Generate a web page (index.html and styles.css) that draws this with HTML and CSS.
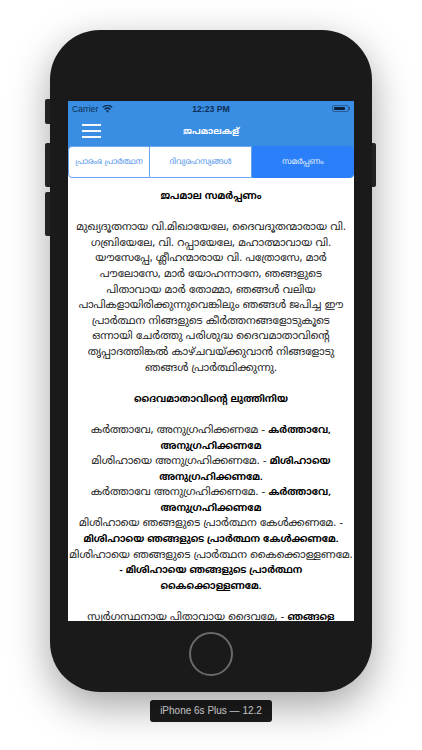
FILE: index.html
```html
<!DOCTYPE html>
<html lang="ml">
<head>
<meta charset="utf-8">
<title>ജപമാലകള്</title>
<link rel="stylesheet" href="styles.css">
</head>
<body>
<div class="device">
  <span class="side-btn mute"></span>
  <span class="side-btn vol-up"></span>
  <span class="side-btn vol-down"></span>
  <span class="side-btn power"></span>
  <div class="screen">
    <div class="status">
      <div class="status-left">Carrier
        <svg class="wifi" viewBox="0 0 12 9" width="11" height="8"><path d="M6 8.6 4.3 6.6a2.6 2.6 0 0 1 3.4 0zM3.3 5.5 2.2 4.2a5.8 5.8 0 0 1 7.6 0L8.7 5.5a4.2 4.2 0 0 0-5.4 0zM1.3 3.2.2 1.9a8.9 8.9 0 0 1 11.6 0l-1.1 1.3a7.3 7.3 0 0 0-9.4 0z"/></svg>
      </div>
      <div class="status-time">12:23 PM</div>
      <div class="status-right"><span class="battery"><span class="battery-fill"></span></span><span class="battery-tip"></span></div>
    </div>
    <div class="nav">
      <div class="menu"><span></span><span></span><span></span></div>
      <div class="nav-title">ജപമാലകള്</div>
    </div>
    <div class="tabs">
      <div class="tab t1">പ്രാരംഭ പ്രാർത്ഥന</div>
      <div class="tab t2">ദിവ്യരഹസ്യങ്ങൾ</div>
      <div class="tab t3 active">സമർപ്പണം</div>
    </div>
    <div class="content">
      <p><b>ജപമാല സമർപ്പണം</b></p>
      <p class="gap">മുഖ്യദൂതനായ വി.മിഖായേലേ, ദൈവദൂതന്മാരായ വി.<br>ഗബ്രിയേലേ, വി. റപ്പായേലേ, മഹാത്മാവായ വി.<br>യൗസേപ്പേ, ശ്ലീഹന്മാരായ വി. പത്രോസേ, മാർ<br>പൗലോസേ, മാർ യോഹന്നാനേ, ഞങ്ങളുടെ<br>പിതാവായ മാർ തോമ്മാ, ഞങ്ങൾ വലിയ<br>പാപികളായിരിക്കുന്നുവെങ്കിലും ഞങ്ങൾ ജപിച്ച ഈ<br>പ്രാർത്ഥന നിങ്ങളുടെ കീർത്തനങ്ങളോടുകൂടെ<br>ഒന്നായി ചേർത്തു പരിശുദ്ധ ദൈവമാതാവിന്റെ<br>തൃപ്പാദത്തിങ്കൽ കാഴ്ചവയ്ക്കുവാൻ നിങ്ങളോടു<br>ഞങ്ങൾ പ്രാർത്ഥിക്കുന്നു.</p>
      <p class="gap"><b>ദൈവമാതാവിന്റെ ലുത്തിനിയ</b></p>
      <p class="gap">കർത്താവേ, അനുഗ്രഹിക്കണമേ - <b>കർത്താവേ,<br>അനുഗ്രഹിക്കണമേ</b><br>മിശിഹായെ അനുഗ്രഹിക്കണമേ. - <b>മിശിഹായെ<br>അനുഗ്രഹിക്കണമേ.</b><br>കർത്താവേ അനുഗ്രഹിക്കണമേ. - <b>കർത്താവേ,<br>അനുഗ്രഹിക്കണമേ</b><br>മിശിഹായെ ഞങ്ങളുടെ പ്രാർത്ഥന കേൾക്കണമേ. -<br><b>മിശിഹായെ ഞങ്ങളുടെ പ്രാർത്ഥന കേൾക്കണമേ.</b><br>മിശിഹായെ ഞങ്ങളുടെ പ്രാർത്ഥന കൈക്കൊള്ളണമേ.<br><b>- മിശിഹായെ ഞങ്ങളുടെ പ്രാർത്ഥന<br>കൈക്കൊള്ളണമേ.</b></p>
      <p class="gap">സ്വർഗസ്ഥനായ പിതാവായ ദൈവമേ, - <b>ഞങ്ങളെ</b></p>
    </div>
  </div>
  <div class="home"></div>
</div>
<div class="badge">iPhone 6s Plus — 12.2</div>
</body>
</html>
```
FILE: styles.css
```css
* { box-sizing: border-box; }
html, body { margin: 0; height: 100%; }
body {
  width: 422px;
  height: 750px;
  overflow: hidden;
  background: #fff;
  padding-top: 30px;
  display: flex;
  flex-direction: column;
  align-items: center;
  font-family: "Noto Sans Malayalam", "Noto Sans", "Liberation Sans", sans-serif;
}
.device {
  position: relative;
  width: 322px;
  height: 662px;
  background: #1a1a1a;
  border-radius: 50px;
  padding: 71px 18px 0;
  box-shadow: 0 14px 40px rgba(0,0,0,.36);
}
.side-btn { position: absolute; width: 5px; background: #222; border-radius: 2px 0 0 2px; left: -5px; }
.mute { top: 69px; height: 25px; }
.vol-up { top: 113px; height: 44px; }
.vol-down { top: 162px; height: 44px; }
.power { left: auto; right: -4px; width: 4px; top: 113px; height: 44px; border-radius: 0 2px 2px 0; }
.screen {
  width: 286px;
  height: 520px;
  background: #fff;
  overflow: hidden;
  display: flex;
  flex-direction: column;
}
.status {
  height: 15px;
  flex: none;
  background: #398de3;
  display: grid;
  grid-template-columns: 1fr auto 1fr;
  align-items: center;
  padding: 0 4px;
  font: 8.6px "Liberation Sans", sans-serif;
  color: #0d2f55;
}
.status-left { display: flex; align-items: center; gap: 4px; }
.wifi { fill: #0d2f55; }
.status-time { font-weight: 700; font-size: 8.7px; }
.status-right { display: flex; justify-content: flex-end; align-items: center; }
.battery { width: 17px; height: 7px; border: 1px solid #2a5d95; border-radius: 2px; padding: 1px; display: flex; }
.battery-fill { width: 11px; background: #0a1f38; border-radius: 1px; }
.battery-tip { width: 1px; height: 3px; background: #2a5d95; }
.nav {
  position: relative;
  height: 30px;
  flex: none;
  background: #398de3;
  display: flex;
  align-items: center;
  justify-content: center;
}
.menu { position: absolute; left: 14px; top: 8px; width: 19px; display: flex; flex-direction: column; gap: 4px; }
.menu span { height: 2px; background: #f4f8fd; display: block; }
.nav-title { color: #fff; font-size: 9px; font-weight: 700; }
.tabs {
  height: 32px;
  flex: none;
  display: grid;
  grid-template-columns: 82px 102px 102px;
  background: linear-gradient(#398de3 50%, #fff 50%);
}
.tab {
  display: flex;
  align-items: center;
  justify-content: center;
  background: #fff;
  color: #4d92ea;
  font-size: 7.7px;
  border: 1px solid #6aa5ee;
  white-space: nowrap;
}
.t1 { border-radius: 4px 0 0 4px; }
.t2 { border-left: 0; }
.t3 { border-radius: 0 4px 4px 0; }
.tab.active { background: #2b80f9; color: #e8f1fe; border-color: #2b80f9; }
.content {
  flex: 1;
  min-height: 0;
  padding: 11px 0 0;
  text-align: center;
  font-size: 10.7px;
  line-height: 15.6px;
  color: #222;
  white-space: nowrap;
}
.content p { margin: 0; }
.content p.gap { margin-top: 15.6px; }
.content b { color: #000; font-size: 9.6px; line-height: 1; }
.home {
  width: 44px;
  height: 44px;
  margin: 11px auto 0;
  border: 2px solid #6a6a6a;
  border-radius: 50%;
}
.badge {
  margin-top: 8px;
  width: 122px;
  height: 22px;
  background: #1c1c1c;
  color: #e0e0e0;
  border-radius: 3px;
  font: 10px/22px "Liberation Sans", sans-serif;
  text-align: center;
}
```
